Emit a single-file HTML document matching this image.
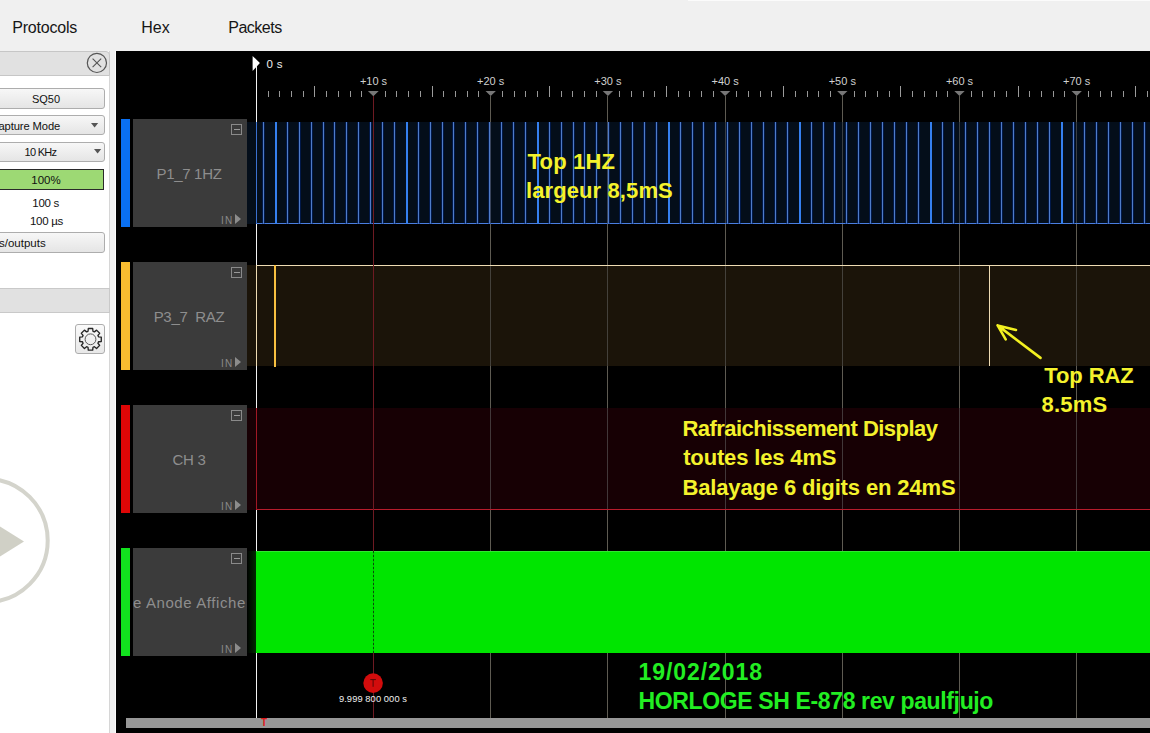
<!DOCTYPE html>
<html><head><meta charset="utf-8">
<style>
*{margin:0;padding:0;box-sizing:border-box}
html,body{width:1150px;height:733px;overflow:hidden;background:#000;font-family:"Liberation Sans",sans-serif}
.a{position:absolute}
.btn{position:absolute;border:1px solid #adadad;border-radius:3px;background:linear-gradient(#f7f7f7,#e5e5e5);overflow:hidden}
.cbar{position:absolute;left:121px;width:9px}
.cbox{position:absolute;left:133px;width:114px;background:#3b3b3b;overflow:hidden}
.mini{position:absolute;left:98px;top:5px;width:11px;height:11px;border:1px solid #8a8a8a}
.mini:after{content:"";position:absolute;left:1.5px;top:4px;width:6px;height:1px;background:#999}
.tri{position:absolute;left:102px;width:0;height:0;border-left:6px solid #8c8c8c;border-top:5.5px solid transparent;border-bottom:5.5px solid transparent}
</style></head><body>

<div class="a" style="left:0;top:0;width:1150px;height:51px;background:#f0f0f0"></div>
<div class="a" style="left:688px;top:0;width:462px;height:1px;background:#fbfbfb"></div>
<div class="a" style="left:12.2px;top:19.71px;font-size:16px;line-height:16px;color:#161616;white-space:nowrap;letter-spacing:-0.2px">Protocols</div>
<div class="a" style="left:141.2px;top:19.71px;font-size:16px;line-height:16px;color:#161616;white-space:nowrap;">Hex</div>
<div class="a" style="left:228.3px;top:19.71px;font-size:16px;line-height:16px;color:#161616;white-space:nowrap;letter-spacing:-0.5px">Packets</div>
<div class="a" style="left:110px;top:51px;width:6px;height:682px;background:#f0f0f0"></div>
<div class="a" style="left:115px;top:51px;width:1px;height:682px;background:#fbfbfb"></div>
<div class="a" style="left:0;top:51px;width:110px;height:682px;background:#fff;border-right:1px solid #d6d6d6"></div>
<div class="a" style="left:-5px;top:51px;width:115px;height:25px;background:#e1e1e1;border:1px solid #c6c6c6;border-top-right-radius:4px"></div>
<svg class="a" style="left:85px;top:51px" width="24" height="24"><circle cx="11.9" cy="11.9" r="9.6" fill="none" stroke="#555" stroke-width="1.2"/><path d="M7.6 7.6L16.2 16.2M16.2 7.6L7.6 16.2" stroke="#555" stroke-width="1.1"/></svg>
<div class="btn" style="left:-14px;top:88px;width:119px;height:21px"></div>
<div class="a" style="left:-14px;top:94.16px;font-size:11px;line-height:11px;color:#111;white-space:nowrap;width:119px;text-align:center;padding-left:1px">SQ50</div>
<div class="btn" style="left:-14px;top:115px;width:119px;height:20px"></div>
<div class="a" style="left:-9.5px;top:120.60px;font-size:11.2px;line-height:11.2px;color:#111;white-space:nowrap;letter-spacing:-0.1px">Capture Mode</div>
<svg class="a" style="left:90.5px;top:123px" width="8" height="5"><path d="M0 0H7.2L3.6 4.5Z" fill="#555"/></svg>
<div class="btn" style="left:-14px;top:142px;width:119px;height:20px"></div>
<div class="a" style="left:24.5px;top:146.56px;font-size:11px;line-height:11px;color:#111;white-space:nowrap;letter-spacing:-0.7px">10 KHz</div>
<svg class="a" style="left:93.6px;top:148.6px" width="8" height="5"><path d="M0 0H7.2L3.6 4.5Z" fill="#555"/></svg>
<div class="a" style="left:-14px;top:169px;width:118px;height:21px;background:#9dd974;border:1px solid #2a2a2a"></div>
<div class="a" style="left:-14px;top:175.05px;font-size:11.5px;line-height:11.5px;color:#111;white-space:nowrap;width:118px;text-align:center;padding-left:2px">100%</div>
<div class="a" style="left:32.3px;top:197.65px;font-size:11.5px;line-height:11.5px;color:#111;white-space:nowrap;letter-spacing:-0.3px">100 s</div>
<div class="a" style="left:30px;top:215.85px;font-size:11.5px;line-height:11.5px;color:#111;white-space:nowrap;letter-spacing:-0.3px">100 µs</div>
<div class="btn" style="left:-14px;top:232px;width:119px;height:21px"></div>
<div class="a" style="left:-1px;top:237.75px;font-size:11.5px;line-height:11.5px;color:#111;white-space:nowrap;">s/outputs</div>
<div class="a" style="left:-5px;top:288px;width:115px;height:25px;background:#e1e1e1;border:1px solid #c9c9c9"></div>
<div class="btn" style="left:75px;top:324px;width:30px;height:30px;background:linear-gradient(#fafafa,#e8e8e8)"></div>
<svg class="a" style="left:75px;top:324px" width="30" height="30"><path d="M23.52 12.82 L26.28 13.11 L26.28 17.49 L23.52 17.78 L22.93 19.22 L24.67 21.38 L21.58 24.47 L19.42 22.73 L17.98 23.32 L17.69 26.08 L13.31 26.08 L13.02 23.32 L11.58 22.73 L9.42 24.47 L6.33 21.38 L8.07 19.22 L7.48 17.78 L4.72 17.49 L4.72 13.11 L7.48 12.82 L8.07 11.38 L6.33 9.22 L9.42 6.13 L11.58 7.87 L13.02 7.28 L13.31 4.52 L17.69 4.52 L17.98 7.28 L19.42 7.87 L21.58 6.13 L24.67 9.22 L22.93 11.38Z" fill="none" stroke="#262626" stroke-width="1.35" stroke-linejoin="round"/><circle cx="15.5" cy="15.3" r="5.4" fill="none" stroke="#5a5a5a" stroke-width="1"/></svg>
<svg class="a" style="left:0;top:470px" width="60" height="140"><circle cx="-13.9" cy="70.5" r="61.6" fill="none" stroke="#d4d4cc" stroke-width="4"/><path d="M24 71.5L-30 38V105Z" fill="#d0d0c6"/></svg>
<svg class="a" style="left:250px;top:54px" width="14" height="20"><path d="M2.6 2L9.9 9L2.6 16.9Z" fill="#fff"/></svg>
<div class="a" style="left:266.5px;top:58.95px;font-size:11.5px;line-height:11.5px;color:#eee;white-space:nowrap;letter-spacing:0.3px">0 s</div>
<svg class="a" style="left:0;top:0" width="1150" height="733"><line x1="268.5" y1="91" x2="268.5" y2="97" stroke="#989898" stroke-width="1"/><line x1="279.5" y1="91" x2="279.5" y2="97" stroke="#989898" stroke-width="1"/><line x1="291.5" y1="91" x2="291.5" y2="97" stroke="#989898" stroke-width="1"/><line x1="303.5" y1="91" x2="303.5" y2="97" stroke="#989898" stroke-width="1"/><line x1="314.5" y1="86" x2="314.5" y2="97" stroke="#9c9c9c" stroke-width="1"/><line x1="326.5" y1="91" x2="326.5" y2="97" stroke="#989898" stroke-width="1"/><line x1="338.5" y1="91" x2="338.5" y2="97" stroke="#989898" stroke-width="1"/><line x1="350.5" y1="91" x2="350.5" y2="97" stroke="#989898" stroke-width="1"/><line x1="361.5" y1="91" x2="361.5" y2="97" stroke="#989898" stroke-width="1"/><path d="M368.3 91L378.7 91L373.5 96Z" fill="#777"/><line x1="385.5" y1="91" x2="385.5" y2="97" stroke="#989898" stroke-width="1"/><line x1="396.5" y1="91" x2="396.5" y2="97" stroke="#989898" stroke-width="1"/><line x1="408.5" y1="91" x2="408.5" y2="97" stroke="#989898" stroke-width="1"/><line x1="420.5" y1="91" x2="420.5" y2="97" stroke="#989898" stroke-width="1"/><line x1="432.5" y1="86" x2="432.5" y2="97" stroke="#9c9c9c" stroke-width="1"/><line x1="443.5" y1="91" x2="443.5" y2="97" stroke="#989898" stroke-width="1"/><line x1="455.5" y1="91" x2="455.5" y2="97" stroke="#989898" stroke-width="1"/><line x1="467.5" y1="91" x2="467.5" y2="97" stroke="#989898" stroke-width="1"/><line x1="478.5" y1="91" x2="478.5" y2="97" stroke="#989898" stroke-width="1"/><path d="M485.5 91L495.9 91L490.7 96Z" fill="#777"/><line x1="502.5" y1="91" x2="502.5" y2="97" stroke="#989898" stroke-width="1"/><line x1="514.5" y1="91" x2="514.5" y2="97" stroke="#989898" stroke-width="1"/><line x1="525.5" y1="91" x2="525.5" y2="97" stroke="#989898" stroke-width="1"/><line x1="537.5" y1="91" x2="537.5" y2="97" stroke="#989898" stroke-width="1"/><line x1="549.5" y1="86" x2="549.5" y2="97" stroke="#9c9c9c" stroke-width="1"/><line x1="561.5" y1="91" x2="561.5" y2="97" stroke="#989898" stroke-width="1"/><line x1="572.5" y1="91" x2="572.5" y2="97" stroke="#989898" stroke-width="1"/><line x1="584.5" y1="91" x2="584.5" y2="97" stroke="#989898" stroke-width="1"/><line x1="596.5" y1="91" x2="596.5" y2="97" stroke="#989898" stroke-width="1"/><path d="M602.7 91L613.1 91L607.9 96Z" fill="#777"/><line x1="619.5" y1="91" x2="619.5" y2="97" stroke="#989898" stroke-width="1"/><line x1="631.5" y1="91" x2="631.5" y2="97" stroke="#989898" stroke-width="1"/><line x1="643.5" y1="91" x2="643.5" y2="97" stroke="#989898" stroke-width="1"/><line x1="654.5" y1="91" x2="654.5" y2="97" stroke="#989898" stroke-width="1"/><line x1="666.5" y1="86" x2="666.5" y2="97" stroke="#9c9c9c" stroke-width="1"/><line x1="678.5" y1="91" x2="678.5" y2="97" stroke="#989898" stroke-width="1"/><line x1="689.5" y1="91" x2="689.5" y2="97" stroke="#989898" stroke-width="1"/><line x1="701.5" y1="91" x2="701.5" y2="97" stroke="#989898" stroke-width="1"/><line x1="713.5" y1="91" x2="713.5" y2="97" stroke="#989898" stroke-width="1"/><path d="M719.9 91L730.3 91L725.1 96Z" fill="#777"/><line x1="736.5" y1="91" x2="736.5" y2="97" stroke="#989898" stroke-width="1"/><line x1="748.5" y1="91" x2="748.5" y2="97" stroke="#989898" stroke-width="1"/><line x1="760.5" y1="91" x2="760.5" y2="97" stroke="#989898" stroke-width="1"/><line x1="771.5" y1="91" x2="771.5" y2="97" stroke="#989898" stroke-width="1"/><line x1="783.5" y1="86" x2="783.5" y2="97" stroke="#9c9c9c" stroke-width="1"/><line x1="795.5" y1="91" x2="795.5" y2="97" stroke="#989898" stroke-width="1"/><line x1="807.5" y1="91" x2="807.5" y2="97" stroke="#989898" stroke-width="1"/><line x1="818.5" y1="91" x2="818.5" y2="97" stroke="#989898" stroke-width="1"/><line x1="830.5" y1="91" x2="830.5" y2="97" stroke="#989898" stroke-width="1"/><path d="M837.1 91L847.5 91L842.3 96Z" fill="#777"/><line x1="854.5" y1="91" x2="854.5" y2="97" stroke="#989898" stroke-width="1"/><line x1="865.5" y1="91" x2="865.5" y2="97" stroke="#989898" stroke-width="1"/><line x1="877.5" y1="91" x2="877.5" y2="97" stroke="#989898" stroke-width="1"/><line x1="889.5" y1="91" x2="889.5" y2="97" stroke="#989898" stroke-width="1"/><line x1="900.5" y1="86" x2="900.5" y2="97" stroke="#9c9c9c" stroke-width="1"/><line x1="912.5" y1="91" x2="912.5" y2="97" stroke="#989898" stroke-width="1"/><line x1="924.5" y1="91" x2="924.5" y2="97" stroke="#989898" stroke-width="1"/><line x1="936.5" y1="91" x2="936.5" y2="97" stroke="#989898" stroke-width="1"/><line x1="947.5" y1="91" x2="947.5" y2="97" stroke="#989898" stroke-width="1"/><path d="M954.3 91L964.7 91L959.5 96Z" fill="#777"/><line x1="971.5" y1="91" x2="971.5" y2="97" stroke="#989898" stroke-width="1"/><line x1="982.5" y1="91" x2="982.5" y2="97" stroke="#989898" stroke-width="1"/><line x1="994.5" y1="91" x2="994.5" y2="97" stroke="#989898" stroke-width="1"/><line x1="1006.5" y1="91" x2="1006.5" y2="97" stroke="#989898" stroke-width="1"/><line x1="1018.5" y1="86" x2="1018.5" y2="97" stroke="#9c9c9c" stroke-width="1"/><line x1="1029.5" y1="91" x2="1029.5" y2="97" stroke="#989898" stroke-width="1"/><line x1="1041.5" y1="91" x2="1041.5" y2="97" stroke="#989898" stroke-width="1"/><line x1="1053.5" y1="91" x2="1053.5" y2="97" stroke="#989898" stroke-width="1"/><line x1="1064.5" y1="91" x2="1064.5" y2="97" stroke="#989898" stroke-width="1"/><path d="M1071.5 91L1081.9 91L1076.7 96Z" fill="#777"/><line x1="1088.5" y1="91" x2="1088.5" y2="97" stroke="#989898" stroke-width="1"/><line x1="1100.5" y1="91" x2="1100.5" y2="97" stroke="#989898" stroke-width="1"/><line x1="1111.5" y1="91" x2="1111.5" y2="97" stroke="#989898" stroke-width="1"/><line x1="1123.5" y1="91" x2="1123.5" y2="97" stroke="#989898" stroke-width="1"/><line x1="1135.5" y1="86" x2="1135.5" y2="97" stroke="#9c9c9c" stroke-width="1"/><line x1="1147.5" y1="91" x2="1147.5" y2="97" stroke="#989898" stroke-width="1"/></svg>
<div class="a" style="left:343.5px;top:75.86px;font-size:11px;line-height:11px;color:#d0d0d0;white-space:nowrap;width:60px;text-align:center">+10 s</div>
<div class="a" style="left:460.7px;top:75.86px;font-size:11px;line-height:11px;color:#d0d0d0;white-space:nowrap;width:60px;text-align:center">+20 s</div>
<div class="a" style="left:577.9px;top:75.86px;font-size:11px;line-height:11px;color:#d0d0d0;white-space:nowrap;width:60px;text-align:center">+30 s</div>
<div class="a" style="left:695.1px;top:75.86px;font-size:11px;line-height:11px;color:#d0d0d0;white-space:nowrap;width:60px;text-align:center">+40 s</div>
<div class="a" style="left:812.3px;top:75.86px;font-size:11px;line-height:11px;color:#d0d0d0;white-space:nowrap;width:60px;text-align:center">+50 s</div>
<div class="a" style="left:929.5px;top:75.86px;font-size:11px;line-height:11px;color:#d0d0d0;white-space:nowrap;width:60px;text-align:center">+60 s</div>
<div class="a" style="left:1046.7px;top:75.86px;font-size:11px;line-height:11px;color:#d0d0d0;white-space:nowrap;width:60px;text-align:center">+70 s</div>
<div class="a" style="left:490px;top:96px;width:1px;height:622px;background:#5e5b52"></div>
<div class="a" style="left:607px;top:96px;width:1px;height:622px;background:#5e5b52"></div>
<div class="a" style="left:725px;top:96px;width:1px;height:622px;background:#5e5b52"></div>
<div class="a" style="left:842px;top:96px;width:1px;height:622px;background:#5e5b52"></div>
<div class="a" style="left:959px;top:96px;width:1px;height:622px;background:#5e5b52"></div>
<div class="a" style="left:1076px;top:96px;width:1px;height:622px;background:#5e5b52"></div>
<div class="cbar" style="top:119px;height:108px;background:#0a70f2"></div>
<div class="cbox" style="top:119px;height:108px"><div class="mini"></div><div class="tri" style="top:95px"></div></div>
<div class="a" style="left:133px;top:166.44px;font-size:15px;line-height:15px;color:#8e8e8e;white-space:nowrap;width:114px;text-align:center;letter-spacing:-0.3px;padding-right:2px">P1_7 1HZ</div>
<div class="a" style="left:221px;top:215.69px;font-size:10px;line-height:10px;color:#8a8a8a;white-space:nowrap;letter-spacing:1.2px">IN</div>
<div class="cbar" style="top:262px;height:108px;background:#f8bc30"></div>
<div class="cbox" style="top:262px;height:108px"><div class="mini"></div><div class="tri" style="top:95px"></div></div>
<div class="a" style="left:133px;top:309.44px;font-size:15px;line-height:15px;color:#8e8e8e;white-space:nowrap;width:114px;text-align:center;letter-spacing:-0.3px;padding-right:2px">P3_7&nbsp; RAZ</div>
<div class="a" style="left:221px;top:358.69px;font-size:10px;line-height:10px;color:#8a8a8a;white-space:nowrap;letter-spacing:1.2px">IN</div>
<div class="cbar" style="top:405px;height:108px;background:#de0606"></div>
<div class="cbox" style="top:405px;height:108px"><div class="mini"></div><div class="tri" style="top:95px"></div></div>
<div class="a" style="left:133px;top:452.44px;font-size:15px;line-height:15px;color:#8e8e8e;white-space:nowrap;width:114px;text-align:center;letter-spacing:-0.3px;padding-right:2px">CH 3</div>
<div class="a" style="left:221px;top:501.69px;font-size:10px;line-height:10px;color:#8a8a8a;white-space:nowrap;letter-spacing:1.2px">IN</div>
<div class="cbar" style="top:548px;height:108px;background:#12e21e"></div>
<div class="cbox" style="top:548px;height:108px"><div class="mini"></div><div class="tri" style="top:95px"></div></div>
<div class="a" style="left:133px;top:595.44px;font-size:15px;line-height:15px;color:#8e8e8e;white-space:nowrap;letter-spacing:0.6px">e Anode Affiche</div>
<div class="a" style="left:221px;top:644.70px;font-size:10px;line-height:10px;color:#8a8a8a;white-space:nowrap;letter-spacing:1.2px">IN</div>
<div class="a" style="left:256px;top:66px;width:1px;height:652px;background:#f2f2f2"></div>
<div class="a" style="left:247px;top:122px;width:903px;height:102px;background:#040e1a"></div>
<svg class="a" style="left:0;top:0" width="1150" height="733"><line x1="256" y1="223.5" x2="1150" y2="223.5" stroke="#4a7ee0" stroke-width="1"/><line x1="256.5" y1="122" x2="256.5" y2="224" stroke="#3a70d0" stroke-width="1"/><rect x="262" y="122" width="3" height="102" fill="rgba(0,40,130,0.45)"/><line x1="263.5" y1="122" x2="263.5" y2="224" stroke="#4f7cc8" stroke-width="1"/><rect x="275" y="122" width="2" height="102" fill="#3580f0"/><rect x="286" y="122" width="3" height="102" fill="rgba(0,40,130,0.45)"/><line x1="287.5" y1="122" x2="287.5" y2="224" stroke="#4f7cc8" stroke-width="1"/><rect x="298" y="122" width="3" height="102" fill="rgba(0,40,130,0.45)"/><line x1="299.5" y1="122" x2="299.5" y2="224" stroke="#4f7cc8" stroke-width="1"/><rect x="310" y="122" width="3" height="102" fill="rgba(0,40,130,0.45)"/><line x1="311.5" y1="122" x2="311.5" y2="224" stroke="#4f7cc8" stroke-width="1"/><rect x="322" y="122" width="3" height="102" fill="rgba(0,40,130,0.45)"/><line x1="323.5" y1="122" x2="323.5" y2="224" stroke="#4f7cc8" stroke-width="1"/><rect x="333" y="122" width="3" height="102" fill="rgba(0,40,130,0.45)"/><line x1="334.5" y1="122" x2="334.5" y2="224" stroke="#4f7cc8" stroke-width="1"/><rect x="345" y="122" width="3" height="102" fill="rgba(0,40,130,0.45)"/><line x1="346.5" y1="122" x2="346.5" y2="224" stroke="#4f7cc8" stroke-width="1"/><rect x="357" y="122" width="3" height="102" fill="rgba(0,40,130,0.45)"/><line x1="358.5" y1="122" x2="358.5" y2="224" stroke="#4f7cc8" stroke-width="1"/><rect x="369" y="122" width="3" height="102" fill="rgba(0,40,130,0.45)"/><line x1="370.5" y1="122" x2="370.5" y2="224" stroke="#4f7cc8" stroke-width="1"/><rect x="381" y="122" width="3" height="102" fill="rgba(0,40,130,0.45)"/><line x1="382.5" y1="122" x2="382.5" y2="224" stroke="#4f7cc8" stroke-width="1"/><rect x="393" y="122" width="3" height="102" fill="rgba(0,40,130,0.45)"/><line x1="394.5" y1="122" x2="394.5" y2="224" stroke="#4f7cc8" stroke-width="1"/><rect x="406" y="122" width="2" height="102" fill="#3580f0"/><rect x="417" y="122" width="3" height="102" fill="rgba(0,40,130,0.45)"/><line x1="418.5" y1="122" x2="418.5" y2="224" stroke="#4f7cc8" stroke-width="1"/><rect x="429" y="122" width="3" height="102" fill="rgba(0,40,130,0.45)"/><line x1="430.5" y1="122" x2="430.5" y2="224" stroke="#4f7cc8" stroke-width="1"/><rect x="441" y="122" width="3" height="102" fill="rgba(0,40,130,0.45)"/><line x1="442.5" y1="122" x2="442.5" y2="224" stroke="#4f7cc8" stroke-width="1"/><rect x="452" y="122" width="3" height="102" fill="rgba(0,40,130,0.45)"/><line x1="453.5" y1="122" x2="453.5" y2="224" stroke="#4f7cc8" stroke-width="1"/><rect x="464" y="122" width="3" height="102" fill="rgba(0,40,130,0.45)"/><line x1="465.5" y1="122" x2="465.5" y2="224" stroke="#4f7cc8" stroke-width="1"/><rect x="476" y="122" width="3" height="102" fill="rgba(0,40,130,0.45)"/><line x1="477.5" y1="122" x2="477.5" y2="224" stroke="#4f7cc8" stroke-width="1"/><rect x="488" y="122" width="3" height="102" fill="rgba(0,40,130,0.45)"/><line x1="489.5" y1="122" x2="489.5" y2="224" stroke="#4f7cc8" stroke-width="1"/><rect x="500" y="122" width="3" height="102" fill="rgba(0,40,130,0.45)"/><line x1="501.5" y1="122" x2="501.5" y2="224" stroke="#4f7cc8" stroke-width="1"/><rect x="512" y="122" width="3" height="102" fill="rgba(0,40,130,0.45)"/><line x1="513.5" y1="122" x2="513.5" y2="224" stroke="#4f7cc8" stroke-width="1"/><rect x="524" y="122" width="3" height="102" fill="rgba(0,40,130,0.45)"/><line x1="525.5" y1="122" x2="525.5" y2="224" stroke="#4f7cc8" stroke-width="1"/><rect x="537" y="122" width="2" height="102" fill="#3580f0"/><rect x="548" y="122" width="3" height="102" fill="rgba(0,40,130,0.45)"/><line x1="549.5" y1="122" x2="549.5" y2="224" stroke="#4f7cc8" stroke-width="1"/><rect x="560" y="122" width="3" height="102" fill="rgba(0,40,130,0.45)"/><line x1="561.5" y1="122" x2="561.5" y2="224" stroke="#4f7cc8" stroke-width="1"/><rect x="572" y="122" width="3" height="102" fill="rgba(0,40,130,0.45)"/><line x1="573.5" y1="122" x2="573.5" y2="224" stroke="#4f7cc8" stroke-width="1"/><rect x="583" y="122" width="3" height="102" fill="rgba(0,40,130,0.45)"/><line x1="584.5" y1="122" x2="584.5" y2="224" stroke="#4f7cc8" stroke-width="1"/><rect x="595" y="122" width="3" height="102" fill="rgba(0,40,130,0.45)"/><line x1="596.5" y1="122" x2="596.5" y2="224" stroke="#4f7cc8" stroke-width="1"/><rect x="607" y="122" width="3" height="102" fill="rgba(0,40,130,0.45)"/><line x1="608.5" y1="122" x2="608.5" y2="224" stroke="#4f7cc8" stroke-width="1"/><rect x="619" y="122" width="3" height="102" fill="rgba(0,40,130,0.45)"/><line x1="620.5" y1="122" x2="620.5" y2="224" stroke="#4f7cc8" stroke-width="1"/><rect x="631" y="122" width="3" height="102" fill="rgba(0,40,130,0.45)"/><line x1="632.5" y1="122" x2="632.5" y2="224" stroke="#4f7cc8" stroke-width="1"/><rect x="643" y="122" width="3" height="102" fill="rgba(0,40,130,0.45)"/><line x1="644.5" y1="122" x2="644.5" y2="224" stroke="#4f7cc8" stroke-width="1"/><rect x="655" y="122" width="3" height="102" fill="rgba(0,40,130,0.45)"/><line x1="656.5" y1="122" x2="656.5" y2="224" stroke="#4f7cc8" stroke-width="1"/><rect x="668" y="122" width="2" height="102" fill="#3580f0"/><rect x="679" y="122" width="3" height="102" fill="rgba(0,40,130,0.45)"/><line x1="680.5" y1="122" x2="680.5" y2="224" stroke="#4f7cc8" stroke-width="1"/><rect x="691" y="122" width="3" height="102" fill="rgba(0,40,130,0.45)"/><line x1="692.5" y1="122" x2="692.5" y2="224" stroke="#4f7cc8" stroke-width="1"/><rect x="702" y="122" width="3" height="102" fill="rgba(0,40,130,0.45)"/><line x1="703.5" y1="122" x2="703.5" y2="224" stroke="#4f7cc8" stroke-width="1"/><rect x="714" y="122" width="3" height="102" fill="rgba(0,40,130,0.45)"/><line x1="715.5" y1="122" x2="715.5" y2="224" stroke="#4f7cc8" stroke-width="1"/><rect x="726" y="122" width="3" height="102" fill="rgba(0,40,130,0.45)"/><line x1="727.5" y1="122" x2="727.5" y2="224" stroke="#4f7cc8" stroke-width="1"/><rect x="738" y="122" width="3" height="102" fill="rgba(0,40,130,0.45)"/><line x1="739.5" y1="122" x2="739.5" y2="224" stroke="#4f7cc8" stroke-width="1"/><rect x="750" y="122" width="3" height="102" fill="rgba(0,40,130,0.45)"/><line x1="751.5" y1="122" x2="751.5" y2="224" stroke="#4f7cc8" stroke-width="1"/><rect x="762" y="122" width="3" height="102" fill="rgba(0,40,130,0.45)"/><line x1="763.5" y1="122" x2="763.5" y2="224" stroke="#4f7cc8" stroke-width="1"/><rect x="774" y="122" width="3" height="102" fill="rgba(0,40,130,0.45)"/><line x1="775.5" y1="122" x2="775.5" y2="224" stroke="#4f7cc8" stroke-width="1"/><rect x="786" y="122" width="3" height="102" fill="rgba(0,40,130,0.45)"/><line x1="787.5" y1="122" x2="787.5" y2="224" stroke="#4f7cc8" stroke-width="1"/><rect x="799" y="122" width="2" height="102" fill="#3580f0"/><rect x="810" y="122" width="3" height="102" fill="rgba(0,40,130,0.45)"/><line x1="811.5" y1="122" x2="811.5" y2="224" stroke="#4f7cc8" stroke-width="1"/><rect x="822" y="122" width="3" height="102" fill="rgba(0,40,130,0.45)"/><line x1="823.5" y1="122" x2="823.5" y2="224" stroke="#4f7cc8" stroke-width="1"/><rect x="833" y="122" width="3" height="102" fill="rgba(0,40,130,0.45)"/><line x1="834.5" y1="122" x2="834.5" y2="224" stroke="#4f7cc8" stroke-width="1"/><rect x="845" y="122" width="3" height="102" fill="rgba(0,40,130,0.45)"/><line x1="846.5" y1="122" x2="846.5" y2="224" stroke="#4f7cc8" stroke-width="1"/><rect x="857" y="122" width="3" height="102" fill="rgba(0,40,130,0.45)"/><line x1="858.5" y1="122" x2="858.5" y2="224" stroke="#4f7cc8" stroke-width="1"/><rect x="869" y="122" width="3" height="102" fill="rgba(0,40,130,0.45)"/><line x1="870.5" y1="122" x2="870.5" y2="224" stroke="#4f7cc8" stroke-width="1"/><rect x="881" y="122" width="3" height="102" fill="rgba(0,40,130,0.45)"/><line x1="882.5" y1="122" x2="882.5" y2="224" stroke="#4f7cc8" stroke-width="1"/><rect x="893" y="122" width="3" height="102" fill="rgba(0,40,130,0.45)"/><line x1="894.5" y1="122" x2="894.5" y2="224" stroke="#4f7cc8" stroke-width="1"/><rect x="905" y="122" width="3" height="102" fill="rgba(0,40,130,0.45)"/><line x1="906.5" y1="122" x2="906.5" y2="224" stroke="#4f7cc8" stroke-width="1"/><rect x="917" y="122" width="3" height="102" fill="rgba(0,40,130,0.45)"/><line x1="918.5" y1="122" x2="918.5" y2="224" stroke="#4f7cc8" stroke-width="1"/><rect x="930" y="122" width="2" height="102" fill="#3580f0"/><rect x="941" y="122" width="3" height="102" fill="rgba(0,40,130,0.45)"/><line x1="942.5" y1="122" x2="942.5" y2="224" stroke="#4f7cc8" stroke-width="1"/><rect x="952" y="122" width="3" height="102" fill="rgba(0,40,130,0.45)"/><line x1="953.5" y1="122" x2="953.5" y2="224" stroke="#4f7cc8" stroke-width="1"/><rect x="964" y="122" width="3" height="102" fill="rgba(0,40,130,0.45)"/><line x1="965.5" y1="122" x2="965.5" y2="224" stroke="#4f7cc8" stroke-width="1"/><rect x="976" y="122" width="3" height="102" fill="rgba(0,40,130,0.45)"/><line x1="977.5" y1="122" x2="977.5" y2="224" stroke="#4f7cc8" stroke-width="1"/><rect x="988" y="122" width="3" height="102" fill="rgba(0,40,130,0.45)"/><line x1="989.5" y1="122" x2="989.5" y2="224" stroke="#4f7cc8" stroke-width="1"/><rect x="1000" y="122" width="3" height="102" fill="rgba(0,40,130,0.45)"/><line x1="1001.5" y1="122" x2="1001.5" y2="224" stroke="#4f7cc8" stroke-width="1"/><rect x="1012" y="122" width="3" height="102" fill="rgba(0,40,130,0.45)"/><line x1="1013.5" y1="122" x2="1013.5" y2="224" stroke="#4f7cc8" stroke-width="1"/><rect x="1024" y="122" width="3" height="102" fill="rgba(0,40,130,0.45)"/><line x1="1025.5" y1="122" x2="1025.5" y2="224" stroke="#4f7cc8" stroke-width="1"/><rect x="1036" y="122" width="3" height="102" fill="rgba(0,40,130,0.45)"/><line x1="1037.5" y1="122" x2="1037.5" y2="224" stroke="#4f7cc8" stroke-width="1"/><rect x="1048" y="122" width="3" height="102" fill="rgba(0,40,130,0.45)"/><line x1="1049.5" y1="122" x2="1049.5" y2="224" stroke="#4f7cc8" stroke-width="1"/><rect x="1061" y="122" width="2" height="102" fill="#3580f0"/><rect x="1072" y="122" width="3" height="102" fill="rgba(0,40,130,0.45)"/><line x1="1073.5" y1="122" x2="1073.5" y2="224" stroke="#4f7cc8" stroke-width="1"/><rect x="1083" y="122" width="3" height="102" fill="rgba(0,40,130,0.45)"/><line x1="1084.5" y1="122" x2="1084.5" y2="224" stroke="#4f7cc8" stroke-width="1"/><rect x="1095" y="122" width="3" height="102" fill="rgba(0,40,130,0.45)"/><line x1="1096.5" y1="122" x2="1096.5" y2="224" stroke="#4f7cc8" stroke-width="1"/><rect x="1107" y="122" width="3" height="102" fill="rgba(0,40,130,0.45)"/><line x1="1108.5" y1="122" x2="1108.5" y2="224" stroke="#4f7cc8" stroke-width="1"/><rect x="1119" y="122" width="3" height="102" fill="rgba(0,40,130,0.45)"/><line x1="1120.5" y1="122" x2="1120.5" y2="224" stroke="#4f7cc8" stroke-width="1"/><rect x="1131" y="122" width="3" height="102" fill="rgba(0,40,130,0.45)"/><line x1="1132.5" y1="122" x2="1132.5" y2="224" stroke="#4f7cc8" stroke-width="1"/><rect x="1143" y="122" width="3" height="102" fill="rgba(0,40,130,0.45)"/><line x1="1144.5" y1="122" x2="1144.5" y2="224" stroke="#4f7cc8" stroke-width="1"/></svg>
<div class="a" style="left:247px;top:265px;width:903px;height:101px;background:#1b1409"></div>
<div class="a" style="left:256px;top:265px;width:894px;height:1px;background:#eedcb4"></div>
<div class="a" style="left:256px;top:265px;width:1px;height:101px;background:#eedcb4"></div>
<div class="a" style="left:274px;top:265px;width:2px;height:102px;background:#f8c040"></div>
<div class="a" style="left:989px;top:265px;width:1px;height:101px;background:#eedcb4"></div>
<div class="a" style="left:247px;top:408px;width:903px;height:102px;background:#170004"></div>
<div class="a" style="left:256px;top:509px;width:894px;height:1px;background:#b81c2c"></div>
<div class="a" style="left:256px;top:408px;width:1px;height:102px;background:#a01825"></div>
<div class="a" style="left:247px;top:551px;width:9px;height:102px;background:linear-gradient(90deg,#000,#002a00)"></div>
<div class="a" style="left:256px;top:551px;width:894px;height:102px;background:#00e500"></div>
<div class="a" style="left:256px;top:551px;width:894px;height:1px;background:#30e830"></div>
<div class="a" style="left:490px;top:122px;width:1px;height:101px;background:rgba(110,110,110,0.5)"></div>
<div class="a" style="left:490px;top:266px;width:1px;height:100px;background:rgba(110,110,110,0.5)"></div>
<div class="a" style="left:490px;top:408px;width:1px;height:101px;background:rgba(110,110,110,0.5)"></div>
<div class="a" style="left:607px;top:122px;width:1px;height:101px;background:rgba(110,110,110,0.5)"></div>
<div class="a" style="left:607px;top:266px;width:1px;height:100px;background:rgba(110,110,110,0.5)"></div>
<div class="a" style="left:607px;top:408px;width:1px;height:101px;background:rgba(110,110,110,0.5)"></div>
<div class="a" style="left:725px;top:122px;width:1px;height:101px;background:rgba(110,110,110,0.5)"></div>
<div class="a" style="left:725px;top:266px;width:1px;height:100px;background:rgba(110,110,110,0.5)"></div>
<div class="a" style="left:725px;top:408px;width:1px;height:101px;background:rgba(110,110,110,0.5)"></div>
<div class="a" style="left:842px;top:122px;width:1px;height:101px;background:rgba(110,110,110,0.5)"></div>
<div class="a" style="left:842px;top:266px;width:1px;height:100px;background:rgba(110,110,110,0.5)"></div>
<div class="a" style="left:842px;top:408px;width:1px;height:101px;background:rgba(110,110,110,0.5)"></div>
<div class="a" style="left:959px;top:122px;width:1px;height:101px;background:rgba(110,110,110,0.5)"></div>
<div class="a" style="left:959px;top:266px;width:1px;height:100px;background:rgba(110,110,110,0.5)"></div>
<div class="a" style="left:959px;top:408px;width:1px;height:101px;background:rgba(110,110,110,0.5)"></div>
<div class="a" style="left:1076px;top:122px;width:1px;height:101px;background:rgba(110,110,110,0.5)"></div>
<div class="a" style="left:1076px;top:266px;width:1px;height:100px;background:rgba(110,110,110,0.5)"></div>
<div class="a" style="left:1076px;top:408px;width:1px;height:101px;background:rgba(110,110,110,0.5)"></div>
<div class="a" style="left:373px;top:96px;width:1px;height:622px;background:#6e1a22"></div>
<div class="a" style="left:373px;top:551px;width:1px;height:102px;background:repeating-linear-gradient(#0a4a0a 0 2px,#00c000 2px 4px)"></div>
<svg class="a" style="left:0;top:0" width="1150" height="733"><path d="M368 91L378.3 91L373.2 96Z" fill="#777"/></svg>
<svg class="a" style="left:362px;top:672px" width="22" height="22"><circle cx="11.1" cy="11.1" r="9.8" fill="#d20c0c"/><path d="M8.3 7.6H13.9M11.1 7.6V14.8" stroke="#5a0808" stroke-width="1"/></svg>
<div class="a" style="left:323px;top:695.28px;font-size:9.3px;line-height:9.3px;color:#f0f0f0;white-space:nowrap;width:100px;text-align:center;letter-spacing:0.1px">9.999 800 000 s</div>
<div class="a" style="left:126px;top:718px;width:1024px;height:10px;background:#979797"></div>
<div class="a" style="left:261px;top:718.20px;font-size:10px;line-height:10px;color:#e01818;white-space:nowrap;font-weight:bold">T</div>
<svg class="a" style="left:0;top:0" width="1150" height="733"><path d="M1040.5 357.9L997.6 325.4M997.6 325.4L1016 330M997.6 325.4L1005.7 339.3" stroke="#f2f020" stroke-width="2.6" stroke-linecap="round" fill="none"/></svg>
<div class="a" style="left:527.5px;top:150.83px;font-size:22px;line-height:22px;color:#f4f22c;white-space:nowrap;font-weight:bold;letter-spacing:0.2px">Top 1HZ</div>
<div class="a" style="left:526px;top:179.53px;font-size:22px;line-height:22px;color:#f4f22c;white-space:nowrap;font-weight:bold;letter-spacing:0.1px">largeur 8,5mS</div>
<div class="a" style="left:1044.3px;top:365.13px;font-size:22px;line-height:22px;color:#f4f22c;white-space:nowrap;font-weight:bold;letter-spacing:-0.1px">Top RAZ</div>
<div class="a" style="left:1041.5px;top:394.13px;font-size:22px;line-height:22px;color:#f4f22c;white-space:nowrap;font-weight:bold;letter-spacing:0.2px">8.5mS</div>
<div class="a" style="left:682.4px;top:418.33px;font-size:22px;line-height:22px;color:#f4f22c;white-space:nowrap;font-weight:bold;letter-spacing:-0.53px">Rafraichissement Display</div>
<div class="a" style="left:683.2px;top:447.33px;font-size:22px;line-height:22px;color:#f4f22c;white-space:nowrap;font-weight:bold;letter-spacing:-0.15px">toutes les 4mS</div>
<div class="a" style="left:682.4px;top:476.53px;font-size:22px;line-height:22px;color:#f4f22c;white-space:nowrap;font-weight:bold;letter-spacing:-0.13px">Balayage 6 digits en 24mS</div>
<div class="a" style="left:638.6px;top:660.60px;font-size:23px;line-height:23px;color:#22ee22;white-space:nowrap;font-weight:bold;letter-spacing:0.93px">19/02/2018</div>
<div class="a" style="left:638.6px;top:689.80px;font-size:23px;line-height:23px;color:#22ee22;white-space:nowrap;font-weight:bold;letter-spacing:-0.37px">HORLOGE SH E-878 rev paulfjujo</div>
</body></html>
